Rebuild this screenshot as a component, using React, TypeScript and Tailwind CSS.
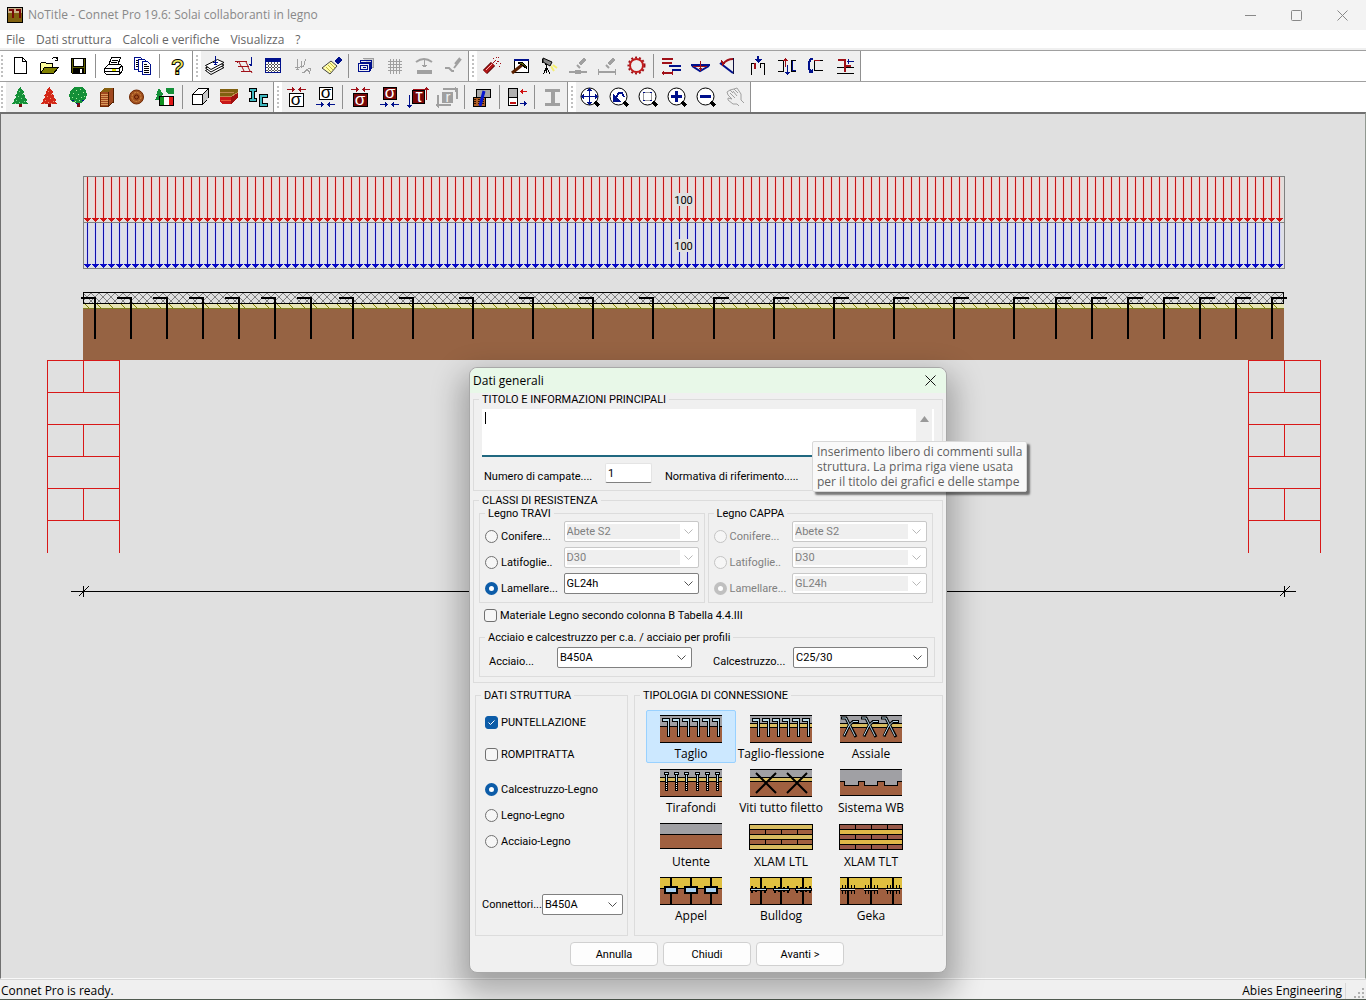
import { useState } from "react";
import type { ReactNode } from "react";

const RED = "#a01018";
const BLUE = "#00108c";
const GRAY = "#a0a0a0";

const Icon = ({ children }: { children: ReactNode }) => (
  <svg width="21" height="21" viewBox="0 0 21 21" fill="none" stroke="#000" shapeRendering="crispEdges" className="shrink-0 overflow-visible" aria-hidden="true">
    {children}
  </svg>
);

const Sym = ({ x, y, size, fill, children }: { x: number; y: number; size: number; fill: string; children: string }) => (
  <text x={x} y={y} fontSize={size} fill={fill} stroke="none" textAnchor="middle" fontFamily="Liberation Sans, sans-serif">
    {children}
  </text>
);

const Conifer = ({ fill, dots }: { fill: string; dots: string }) => (
  <Icon>
    <path d="M9 16h3v4H9z" fill="#7a0c10" stroke="none" />
    <path d="M10 0h1l1 3 2 2-1 1 2 3-1 1 3 3-1 1 2 3H2l2-3-1-1 3-3-1-1 2-3-1-1 2-2z" fill={fill} stroke="none" />
    <path d="M9 4.5h1M12 7.5h1M8 9.5h1M11 11.5h1M6 13.5h1M14 14.5h1M9 15.5h1M5 16.5h1M12 16.5h1" stroke={dots} />
  </Icon>
);

const Lens = ({ children }: { children?: ReactNode }) => (
  <Icon>
    <circle cx="9.5" cy="9.5" r="8.5" fill="#fff" shapeRendering="auto" />
    <path d="M15 15l4 4" strokeWidth="3" />
    {children}
  </Icon>
);

const icons: Record<string, ReactNode> = {
  nuovo: (
    <Icon>
      <path d="M4.5 1.5h8l4 4v12h-12z" fill="#fff" />
      <path d="M12.5 1.5v4h4" />
    </Icon>
  ),
  apri: (
    <Icon>
      <path d="M1.5 17.5v-10l1-1h4l1 1h6v4" fill="#ffff9c" />
      <path d="M1.5 17.5l4-6h14l-5 6z" fill="#808000" />
      <path d="M12.5 3.5l2-2h3l1 2M18.5 1v4M16 4.5h3" />
    </Icon>
  ),
  salva: (
    <Icon>
      <path d="M3.5 2.5h14v15h-13l-1-1z" fill="#606000" />
      <path d="M6 3h9v7H6z" fill="#fff" stroke="none" />
      <path d="M5.5 3v7.5h10V3" />
      <path d="M5 12h11v5H5z" fill="#000" stroke="none" />
      <path d="M12 13h2v4h-2z" fill="#fff" stroke="none" />
    </Icon>
  ),
  stampa: (
    <Icon>
      <path d="M5.5 9.5l3-8h9l-3 8z" fill="#fff" />
      <path d="M9 4.5h6M8 6.5h6" />
      <path d="M1.5 12.5l4-4h12l2 2v4l-3 4h-13l-2-2z" fill="#fff" />
      <path d="M1.5 12.5h14l4-3M2 15.5h14M16.5 12v6" />
      <path d="M9 13h4v2H9z" fill="#e8e800" stroke="none" />
    </Icon>
  ),
  anteprima: (
    <Icon>
      <path d="M2.5 1.5h6l3 3v9h-9z" fill="#fff" stroke={BLUE} />
      <path d="M4 4.5h4M4 6.5h5M4 8.5h5M4 10.5h5" />
      <path d="M6.5 3.5h6l3 3v9h-9z" fill="#fff" stroke={BLUE} />
      <path d="M10.5 5.5h5l3 3v10h-8z" fill="#fff" stroke={BLUE} />
      <path d="M12 8.5h3M12 10.5h5M12 12.5h5M12 14.5h5M12 16.5h5" />
    </Icon>
  ),
  guida: (
    <Icon>
      <text x="10.5" y="18" fontSize="21" textAnchor="middle" fontFamily="Liberation Sans, sans-serif" fill="#f0e860" stroke="#000" strokeWidth="2" paintOrder="stroke" shapeRendering="auto">?</text>
    </Icon>
  ),
  carichi: (
    <Icon>
      <g shapeRendering="auto">
        <path d="M.5 14.5l12-6 6.5 3-13 7z" fill="#fff" />
        <path d="M.5 12l12-6 6.5 3-13 7z" fill="#fff" />
        <path d="M.5 9.5l12-6 6.5 3-13 7z" fill="#fff" />
      </g>
      <path d="M10.5 0v9M8 6.5h5M9 8h3" stroke={BLUE} />
    </Icon>
  ),
  combinazioni: (
    <Icon>
      <g stroke={RED} shapeRendering="auto">
        <path d="M1 5.5h12M4 10.5h11M7 15.5h11" />
        <path d="M2 5l2 2M5 6l2 4M12 6l2 4M8 11l2 4M14 11l2 4M17 15l1 2" />
      </g>
      <path d="M17.5 1v8M15 8.5h2M16 9.5h2" stroke={BLUE} />
    </Icon>
  ),
  tabella: (
    <Icon>
      <path d="M2.5 2.5h15v14h-15z" fill="#fff" stroke={BLUE} />
      <path d="M2 3h16v3H2z" fill={BLUE} stroke="none" />
      <path d="M5.5 6v10M8.5 6v10M11.5 6v10M14.5 6v10M3 8.5h14M3 11.5h14M3 14.5h14" stroke="#555" strokeDasharray="2 1" />
    </Icon>
  ),
  sisma: (
    <Icon>
      <path d="M5.5 3v11M3 11.5h5M4 13.5h3M9.5 5v7M8 10.5h3M13.5 3l-2 8M10 16.5h2l3-3 2 2v2M16 12h2v3" stroke={GRAY} />
    </Icon>
  ),
  pennello: (
    <Icon>
      <g shapeRendering="auto">
        <path d="M14 5l4-4 3 3-4 4z" fill={BLUE} stroke={BLUE} />
        <path d="M10 5l6 5-7 8-8-6z" fill="#fffca8" stroke="#444" />
        <path d="M5 11l5 5M7 9l5 5M9 7l5 5" stroke="#c0b840" />
      </g>
    </Icon>
  ),
  cornici: (
    <Icon>
      <path d="M6.5 2.5h11v9h-2" fill="#d0d0d0" stroke={GRAY} />
      <path d="M4.5 6v-1.5h11v8h-2M2.5 7.5h11v8h-11zM4.5 9.5h7v4h-7zM6.5 11.5h3" stroke={BLUE} />
      <path d="M3.5 6.5h11v8" stroke={BLUE} />
    </Icon>
  ),
  griglia: (
    <Icon>
      <path d="M5.5 3v15M8.5 3v15M11.5 3v15M14.5 3v15M3 5.5h14M3 8.5h14M3 11.5h14M3 14.5h14" stroke={GRAY} />
    </Icon>
  ),
  inflessione: (
    <Icon>
      <path d="M2 6q8-6 16 0" stroke={GRAY} strokeWidth="2" shapeRendering="auto" />
      <path d="M10.5 4v7M8 9.5h5M9 10.5h3" stroke={GRAY} />
      <path d="M3 14h15v4H3z" fill={GRAY} stroke="none" />
    </Icon>
  ),
  curva: (
    <Icon>
      <path d="M2 12h4l3 3h2M18 3l-7 9M17 2l-5 6" stroke={GRAY} strokeWidth="2" shapeRendering="auto" />
    </Icon>
  ),
  dinamite: (
    <Icon>
      <path d="M4 16l8-8" stroke="#500" strokeWidth="6" shapeRendering="auto" />
      <path d="M4 16l8-8" stroke="#b01818" strokeWidth="4" shapeRendering="auto" />
      <path d="M5 14l6-6" stroke="#ffb0b0" />
      <path d="M12 7l3-3M15.5 1v1M18 1l-1 1M16 5.5h2M19 7.5h1M18.5 10v1M12.5 2v1M15 7l1 1" stroke={RED} />
    </Icon>
  ),
  martello: (
    <Icon>
      <path d="M4.5 3.5h14v13h-14z" fill="#fff" />
      <path d="M4 3h15v2H4z" fill={BLUE} stroke="none" />
      <path d="M2 17l10-8" stroke="#5a2000" strokeWidth="3" shapeRendering="auto" />
      <path d="M8 7l4-1 4 4v2l-4-3z" fill="#606000" />
    </Icon>
  ),
  lampada: (
    <Icon>
      <g shapeRendering="auto">
        <path d="M4 2l9 4-2 4-7-4z" fill="#888" />
        <path d="M12 10l3 5M14 9l4 3M13 12l2 3" stroke="#f4ee70" strokeWidth="2" />
      </g>
      <path d="M3.5 3v4M6.5 7l1 3v7M7.5 11l-3 7M8 12l3 6" />
    </Icon>
  ),
  cancella1: (
    <Icon>
      <g stroke={GRAY} shapeRendering="auto">
        <path d="M11 7l5-5 2 2-5 5z" fill={GRAY} />
        <path d="M9 9l3 3" strokeWidth="2" />
      </g>
      <path d="M1 16h18" stroke={GRAY} strokeWidth="2" />
      <path d="M7 14h6v4H7z" fill={GRAY} stroke="none" />
    </Icon>
  ),
  cancella2: (
    <Icon>
      <g stroke={GRAY} shapeRendering="auto">
        <path d="M11 7l5-5 2 2-5 5z" fill={GRAY} />
        <path d="M9 9l3 3" strokeWidth="2" />
      </g>
      <path d="M1 16h18" stroke={GRAY} strokeWidth="2" />
      <path d="M1.5 13v6M18.5 13v6" stroke={GRAY} />
    </Icon>
  ),
  ingranaggio: (
    <Icon>
      <g shapeRendering="auto">
        <circle cx="10.5" cy="9.5" r="8" stroke={RED} strokeWidth="2" strokeDasharray="2 2" />
        <circle cx="10.5" cy="9.5" r="6.5" stroke="#c01c1c" strokeWidth="2" />
      </g>
    </Icon>
  ),
  tagli: (
    <Icon>
      <path d="M1 3h11M1 7h10M1 17h11" stroke={RED} strokeWidth="2" />
      <path d="M2.5 15v4M11.5 15v4" stroke={RED} />
      <path d="M8 10h12M11 14h9" stroke={BLUE} strokeWidth="2" />
    </Icon>
  ),
  momento: (
    <Icon>
      <path d="M1 9h19" stroke={BLUE} strokeWidth="2" />
      <path d="M2 10l8 5 9-5" stroke={BLUE} strokeWidth="2" shapeRendering="auto" />
      <path d="M3 10.5h14M10.5 5v10M9 12.5h3" stroke={RED} />
    </Icon>
  ),
  rotazione: (
    <Icon>
      <path d="M1 7l13 10" stroke={BLUE} strokeWidth="2" shapeRendering="auto" />
      <path d="M14.5 2v16" stroke="#101040" />
      <path d="M4 8q4-5 10-5" stroke={RED} strokeWidth="2" shapeRendering="auto" />
      <path d="M2 4l1 6 3-3z" fill={RED} stroke="none" />
    </Icon>
  ),
  appoggio: (
    <Icon>
      <path d="M3.5 19V7.5h4M16.5 19V7.5h-4" strokeWidth="1" />
      <path d="M7 7v6" stroke={RED} strokeWidth="2" />
      <path d="M12.5 7v5" />
      <path d="M10 0v5" stroke={BLUE} strokeWidth="2" />
      <path d="M7 3h7l-3.5 4z" fill={BLUE} stroke="none" />
    </Icon>
  ),
  scorrimento: (
    <Icon>
      <path d="M1 4.5h5v11H1M19 4.5h-5v11h5" />
      <path d="M8.5 2v9M6 4.5h5M7 3.5h3" stroke={RED} />
      <path d="M10.5 9v10M8 16.5h5M9 17.5h3M15.5 5v10M15 14.5h4" stroke={BLUE} />
    </Icon>
  ),
  torsione: (
    <Icon>
      <path d="M17 4.5H8.5v10H17" />
      <path d="M7 3H5L3 6v7l2 3" stroke={BLUE} strokeWidth="2" />
      <path d="M2 17h5v-4z" fill={BLUE} stroke="none" />
      <path d="M8 4.5h6" stroke={RED} />
    </Icon>
  ),
  vincolo: (
    <Icon>
      <path d="M2 11.5h17M2 17.5h17" />
      <path d="M3 4h7v12M10 10h6" stroke={RED} strokeWidth="2" />
      <path d="M12 5.5h7M13.5 3v5" stroke={BLUE} />
    </Icon>
  ),
  abete: <Conifer fill="#149038" dots="#80e090" />,
  abeteRosso: <Conifer fill="#d42818" dots="#f09070" />,
  latifoglia: (
    <Icon>
      <path d="M9 16h3v4H9z" fill="#7a0c10" stroke="none" />
      <path d="M7 0h7l4 3 1 5-2 5-4 3H8l-5-2-2-6 2-5z" fill="#149038" stroke="none" />
      <path d="M8 3.5h1M12 2.5h1M5 6.5h1M10 7.5h1M15 5.5h1M4 10.5h1M8 11.5h1M13 10.5h1M16 9.5h1M11 13.5h1M7 14.5h1" stroke="#b0f0a0" />
      <path d="M14 13.5h2M8 16l2 2M4 13.5h2" stroke={BLUE} />
    </Icon>
  ),
  lamellare: (
    <Icon>
      <path d="M3 5l5-4h8v14l-5 4H3z" fill="#a04820" stroke="none" />
      <path d="M3 5l5-4h8l-5 4z" fill="#886010" stroke="none" />
      <path d="M3 7.5h8M3 9.5h8M3 11.5h8M3 13.5h8M3 15.5h8M3 17.5h8" stroke="#d89858" />
      <path d="M11.5 5v14l5-4V1" stroke="#502000" />
      <path d="M3.5 5v14h8" stroke="#702800" />
    </Icon>
  ),
  tronco: (
    <Icon>
      <g shapeRendering="auto">
        <circle cx="10.5" cy="10" r="7" fill="#a05020" stroke="#702800" />
        <circle cx="10.5" cy="10" r="4.5" stroke="#d89040" strokeDasharray="2 1" />
        <circle cx="10.5" cy="10" r="2" stroke="#601800" />
      </g>
    </Icon>
  ),
  italia: (
    <Icon>
      <path d="M4 1l4 6-1 2 2 4H0l2-4-1-1z" fill="#149038" stroke="none" />
      <path d="M11 1h8v6h-6l-2-3z" fill="#149038" stroke="none" />
      <path d="M4.5 9.5h14v9h-14z" fill="#fff" />
      <path d="M5 10h4v8H5z" fill="#109020" stroke="none" />
      <path d="M14 10h4v8h-4z" fill="#e01818" stroke="none" />
    </Icon>
  ),
  blocco: (
    <Icon>
      <path d="M2.5 7.5l6-6h10v9l-6 7h-10z" fill="#fff" />
      <path d="M12 8l6-6v9l-6 6z" fill="#c8c8c8" stroke="none" />
      <path d="M2.5 7.5h10v10M12.5 7.5l6-6" />
    </Icon>
  ),
  trave: (
    <Icon>
      <g stroke="none">
        <path d="M1 2h18v4l-7 4H1z" fill="#806010" />
        <path d="M1 9h11l7-4v5l-7 7H4l-3-2z" fill="#c81818" />
        <path d="M12 9l7-4v5l-7 7z" fill="#a01010" />
      </g>
      <path d="M1 5.5h14M1 9.5h11l7-4" stroke="#c08850" />
      <path d="M2 13.5h10" stroke="#e85838" />
    </Icon>
  ),
  profili: (
    <Icon>
      <path d="M1 3h8M5 3v10M1 13h8" strokeWidth="4" />
      <path d="M2 3h6M5 3v10M2 13h6" stroke="#40b8c0" strokeWidth="2" />
      <path d="M20 9h-7v9h7" strokeWidth="4" />
      <path d="M19 9h-6v9h6" stroke="#40b8c0" strokeWidth="2" />
    </Icon>
  ),
  sigma1: (
    <Icon>
      <path d="M3.5 6.5h14v13h-14z" fill="#fff" />
      <Sym x={10} y={18} size={17} fill="#000">σ</Sym>
      <path d="M1 2.5h8M12 2.5h8M6.5 0v5M14.5 0v5M7.5 1v3M13.5 1v3" stroke={RED} />
    </Icon>
  ),
  sigma2: (
    <Icon>
      <path d="M4.5 .5h13v12h-13z" fill="#fff" />
      <Sym x={11} y={11} size={17} fill="#000">σ</Sym>
      <path d="M1 17.5h8M12 17.5h8M6.5 15v5M14.5 15v5M7.5 16v3M13.5 16v3" stroke={BLUE} />
    </Icon>
  ),
  sigma3: (
    <Icon>
      <path d="M3.5 6.5h14v13h-14z" fill="#780808" />
      <Sym x={10} y={18} size={17} fill="#fff">σ</Sym>
      <path d="M1 2.5h8M12 2.5h8M6.5 0v5M14.5 0v5M7.5 1v3M13.5 1v3" stroke={RED} />
    </Icon>
  ),
  sigma4: (
    <Icon>
      <path d="M4.5 .5h13v12h-13z" fill="#780808" />
      <Sym x={11} y={11} size={17} fill="#fff">σ</Sym>
      <path d="M1 17.5h8M12 17.5h8M6.5 15v5M14.5 15v5M7.5 16v3M13.5 16v3" stroke={BLUE} />
    </Icon>
  ),
  tau: (
    <Icon>
      <path d="M4.5 3.5h12v13h-12z" fill="#780808" />
      <Sym x={11} y={15} size={18} fill="#fff">τ</Sym>
      <path d="M5 2.5h12M18.5 0v13M16 2.5h5M17 1.5h3" stroke={RED} />
      <path d="M1.5 8v13M-1 18.5h5M0 19.5h3" stroke={BLUE} />
    </Icon>
  ),
  rigidezza: (
    <Icon>
      <path d="M5 5h11v11H5z" fill={GRAY} stroke="none" />
      <Sym x={11} y={15} size={15} fill="#f0f0f0">r</Sym>
      <path d="M6 2h14v10M0 18h14M1 18V8" stroke={GRAY} strokeWidth="2" />
      <path d="M18 0l4 2-4 3zM2 16l-4 2 4 3z" fill={GRAY} stroke="none" />
    </Icon>
  ),
  connettore: (
    <Icon>
      <path d="M4.5 2.5h14v8h-14z" fill="#a8a8a8" />
      <path d="M1.5 10.5h12v9h-12z" fill="#b06028" />
      <path d="M2 12.5h11M2 14.5h11M2 16.5h11" stroke="#301000" strokeDasharray="2 2" />
      <path d="M12 4L8 19" stroke="#0818d0" strokeWidth="3" shapeRendering="auto" />
    </Icon>
  ),
  sezione: (
    <Icon>
      <path d="M1.5 1.5h9v9h-9z" fill="#b0b0b0" />
      <path d="M1.5 10.5h9v8h-9z" fill="#fff" />
      <path d="M3 16h6" stroke="#c01010" strokeWidth="2" />
      <path d="M13 4.5h7M15.5 2v5M14.5 3v3" stroke="#d01010" />
      <path d="M13 16.5h7M17.5 14v5M18.5 15v3" stroke={BLUE} />
    </Icon>
  ),
  profiloI: (
    <Icon>
      <path d="M3 3h15M3 17h15" stroke={GRAY} strokeWidth="3" />
      <path d="M10.5 3v15" stroke={GRAY} strokeWidth="4" />
    </Icon>
  ),
  zoomTutto: (
    <Lens>
      <path d="M9.5 1v17M1 9.5h17" stroke={BLUE} />
      <path d="M9.5 1l3 3h-6zM9.5 18l3-3h-6zM1 9.5l3-3v6zM18 9.5l-3-3v6z" fill={BLUE} stroke="none" />
    </Lens>
  ),
  zoomPrec: (
    <Lens>
      <path d="M4 7v7h7z" fill={BLUE} stroke={BLUE} />
      <path d="M7 10l3-4h3l2 4" stroke={BLUE} strokeWidth="2" />
    </Lens>
  ),
  zoomFinestra: (
    <Lens>
      <path d="M5.5 5.5h8v8h-8z" stroke="#999" />
      <path d="M5 5.5h2M12 5.5h2M5 13.5h2M12 13.5h2" stroke={BLUE} />
    </Lens>
  ),
  zoomPiu: (
    <Lens>
      <path d="M4 9.5h11M9.5 4v11" stroke={BLUE} strokeWidth="3" />
    </Lens>
  ),
  zoomMeno: (
    <Lens>
      <path d="M4 9.5h11" stroke={BLUE} strokeWidth="3" />
    </Lens>
  ),
  mano: (
    <Icon>
      <g stroke={GRAY} shapeRendering="auto">
        <path d="M2 5l3-2 3 3M3 8l-1-3M5 3l4-1 4 4M9 2l3-1 4 6v6l3 3M3 8l4 4-4-1v2l5 4h4l2 2M5 6l5 5M8 4l4 5" />
      </g>
    </Icon>
  ),
};

type Bar = { white?: boolean; groups: string[][] };

const disabledTools = ["sisma", "griglia", "inflessione", "curva", "cancella1", "cancella2", "rigidezza", "profiloI", "mano"];

const barRows: Bar[][] = [
  [
    { white: true, groups: [["nuovo", "apri", "salva"], ["stampa", "anteprima"], ["guida"]] },
    { groups: [["carichi", "combinazioni", "tabella", "sisma", "pennello"], ["cornici", "griglia", "inflessione", "curva"]] },
    {
      groups: [
        ["dinamite", "martello", "lampada", "cancella1", "cancella2", "ingranaggio"],
        ["tagli", "momento", "rotazione", "appoggio", "scorrimento", "torsione", "vincolo"],
      ],
    },
  ],
  [
    { groups: [["abete", "abeteRosso", "latifoglia", "lamellare", "tronco", "italia"], ["blocco", "trave", "profili"]] },
    { groups: [["sigma1", "sigma2"], ["sigma3", "sigma4", "tau", "rigidezza"], ["connettore"], ["sezione"], ["profiloI"]] },
    { groups: [["zoomTutto", "zoomPrec", "zoomFinestra", "zoomPiu", "zoomMeno", "mano"]] },
  ],
];

const ToolRow = ({ bars }: { bars: Bar[] }) => (
  <div className="flex h-[31px] border-t border-[#a0a0a0] bg-white">
    {bars.map((bar, i) => (
      <div key={i} className={`flex border-r border-[#909090] ${bar.white ? "bg-white" : "bg-[#efefef]"}`}>
        <div className={`flex bg-white py-1 ${i === 0 ? "w-[6px] pl-px" : "w-2 pl-[3px]"}`}>
          <div className="w-0 border-l-2 border-dotted border-[#c0c0c0]" />
        </div>
        {bar.groups.map((group, g) => (
          <div key={g} className="flex">
            {g > 0 && <div className="my-[3px] mr-[3px] ml-[2px] w-px bg-[#909090]" />}
            {group.map((tool) => (
              <button
                key={tool}
                aria-label={tool}
                disabled={disabledTools.includes(tool)}
                className="flex w-[29px] items-center justify-center"
              >
                {icons[tool]}
              </button>
            ))}
          </div>
        ))}
      </div>
    ))}
  </div>
);

const loadXs = Array.from({ length: 150 }, (_, i) => 87 + i * 8);
const pinXs = [95, 131, 167, 203, 239, 275, 311, 353, 413, 473, 533, 593, 653, 714, 774, 834, 894, 954, 1014, 1056, 1092, 1128, 1164, 1200, 1236, 1272];

const Load = ({ y, line, glow, head, tint }: { y: number; line: string; glow: string; head: string; tint: string }) => (
  <g>
    <rect x="83.5" y={y + 0.5} width="1201" height="46" fill={tint} stroke="#808080" />
    {loadXs.map((x) => (
      <g key={x}>
        <rect x={x - 1} y={y + 1} width="3" height="42" fill={glow} />
        <rect x={x} y={y + 1} width="1" height="42" fill={line} />
        <path d={`M${x - 3} ${y + 42}h7v1h-1v1h-1v1h-1v1h-1v-1h-1v-1h-1v-1h-1z`} fill={head} />
      </g>
    ))}
    <rect x="673" y={y + 17} width="20" height="13" fill="#e0e0e0" />
    <text x="683.5" y={y + 28} fontSize="11" textAnchor="middle" fill="#000" fontFamily="Roboto, sans-serif">
      100
    </text>
  </g>
);

const Wall = ({ x }: { x: number }) => (
  <path
    d={`M${x}.5 553V360.5h72V553M${x} 392.5h72M${x} 424.5h72M${x} 456.5h72M${x} 488.5h72M${x} 520.5h72M${x + 36}.5 360v32M${x + 36}.5 424v32M${x + 36}.5 488v32`}
    fill="none"
    stroke="#d81818"
  />
);

const Drawing = () => (
  <svg className="h-full w-full" viewBox="1 114 1364 864" shapeRendering="crispEdges" role="img" aria-label="Schema del solaio">
    <defs>
      <pattern id="mesh" width="8" height="8" patternUnits="userSpaceOnUse" x="83" y="293">
        <path d="M0 0l8 8M8 0l-8 8" stroke="#808080" fill="none" />
      </pattern>
      <pattern id="plank" width="12" height="5" patternUnits="userSpaceOnUse" x="83" y="304">
        <path d="M2 0l5 5" stroke="#808000" fill="none" />
      </pattern>
    </defs>
    <Load y={176} line="#c01818" glow="#f4cccc" head="#d01010" tint="#e3dedc" />
    <Load y={222} line="#1010a8" glow="#d2d2f6" head="#0808c8" tint="#dedfe6" />
    <rect x="83" y="308" width="1201" height="52" fill="#966343" />
    <rect x="83.5" y="292.5" width="1200" height="11" fill="#e0e0e0" />
    <rect x="83.5" y="292.5" width="1200" height="11" fill="url(#mesh)" stroke="#000" />
    <rect x="83" y="304" width="1201" height="4" fill="#e6e4b4" />
    <rect x="83" y="304" width="1201" height="4" fill="url(#plank)" />
    <path d="M83 308.5h1201" stroke="#808020" />
    <path
      d={pinXs.map((x) => (x < 700 ? `M${x - 14} 298H${x}V339` : `M${x + 15} 298H${x}V339`)).join("")}
      fill="none"
      stroke="#000"
      strokeWidth="2"
    />
    <Wall x={47} />
    <Wall x={1248} />
    <path d="M71 591.5h1225M83.5 586v11M1284.5 586v11M79 596l10-10M1280 596l10-10" stroke="#000" />
  </svg>
);

const Group = ({ title, className = "", children }: { title: string; className?: string; children: ReactNode }) => (
  <fieldset className={`min-w-0 border border-[#dcdcdc] ${className}`}>
    <legend className="ml-[5px] h-[13px] px-[3px] leading-[13px] whitespace-nowrap">{title}</legend>
    {children}
  </fieldset>
);

const Chevron = ({ className }: { className: string }) => (
  <svg width="9" height="5" viewBox="0 0 9 5" fill="none" stroke="currentColor" className={className} aria-hidden="true">
    <path d="M.5 .5l4 4 4-4" />
  </svg>
);

const Combo = ({ label, value, disabled, className = "" }: { label: string; value: string; disabled?: boolean; className?: string }) => (
  <div className={`flex h-[21px] items-center rounded-[2px] border bg-white p-[2px] ${disabled ? "border-[#c8c8c8]" : "border-[#808080]"} ${className}`}>
    <select
      aria-label={label}
      disabled={disabled}
      className={`h-[15px] min-w-0 flex-1 appearance-none leading-[15px] ${disabled ? "bg-[#efefef] text-[#808080] opacity-100" : "bg-white text-black"}`}
    >
      <option>{value}</option>
    </select>
    <Chevron className={`mr-[3px] ml-1 ${disabled ? "text-[#b8b8b8]" : "text-[#505050]"}`} />
  </div>
);

const radioClass =
  "size-[13px] shrink-0 appearance-none rounded-full border border-[#707070] bg-[#f6f6f6] checked:border-4 checked:border-[#0c5ca8] checked:bg-white disabled:border-[#c4c4c4] disabled:checked:border-[#c0c0c0]";

const Radio = ({ name, label, checked, disabled }: { name: string; label: string; checked?: boolean; disabled?: boolean }) => (
  <label className={`flex items-center gap-[3px] whitespace-nowrap ${disabled ? "text-[#808080]" : ""}`}>
    <input type="radio" name={name} defaultChecked={checked} disabled={disabled} className={radioClass} />
    {label}
  </label>
);

const Check = ({ label, checked }: { label: string; checked?: boolean }) => {
  const [on, setOn] = useState(!!checked);
  return (
    <label className="flex items-center gap-[3px] whitespace-nowrap">
      <span className="relative flex">
        <input
          type="checkbox"
          checked={on}
          onChange={() => setOn(!on)}
          className="size-[13px] appearance-none rounded-[3px] border border-[#707070] bg-[#f6f6f6] checked:border-[#0c5ca8] checked:bg-[#0c5ca8]"
        />
        {on && (
          <svg viewBox="0 0 13 13" fill="none" stroke="#fff" className="pointer-events-none absolute inset-0">
            <path d="M3.5 6.5l2 2 4-4" />
          </svg>
        )}
      </span>
      {label}
    </label>
  );
};

const WoodClass = ({ title, name, disabled }: { title: string; name: string; disabled?: boolean }) => {
  const rows = [
    { label: "Conifere...", value: "Abete S2" },
    { label: "Latifoglie..", value: "D30" },
    { label: "Lamellare...", value: "GL24h" },
  ];
  return (
    <Group title={title} className="h-[96px] flex-1">
      <div className="flex flex-col gap-1 pt-px pr-[5px] pl-[5px]">
        {rows.map((row, i) => (
          <div key={row.label} className="flex justify-between">
            <div className="pt-[9px]">
              <Radio name={name} label={row.label} checked={i === 2} disabled={disabled} />
            </div>
            <Combo label={row.label} value={row.value} disabled={disabled || i < 2} className="w-[135px]" />
          </div>
        ))}
      </div>
    </Group>
  );
};

const BROWN = "#a06040";
const CEMENT = "#a0a0a4";
const YELLOW = "#d8bc60";

const Layers = ({ plank, top = CEMENT }: { plank?: boolean; top?: string }) => (
  <>
    <path d="M0 1h62v12H0z" fill={top} stroke="none" />
    <path d="M0 12h62v15H0z" fill={BROWN} stroke="none" />
    {plank && <path d="M-1 8.5h64v4H-1z" fill={YELLOW} />}
    {!plank && <path d="M0 11.5h62" />}
    <path d="M0 .5h62M0 27.5h62" />
  </>
);

const hooks = [3, 13, 23, 33, 43, 53];

const Hooks = () => (
  <path d={hooks.map((x) => `M${x - 0.5} 3.5h7v18h-2v-15h-5z`).join("")} fill="#b8d8e8" />
);

const Bricks = ({ even, odd }: { even: string; odd: string }) => (
  <>
    {[0, 1, 2, 3, 4].map((r) => (
      <rect key={r} x=".5" y={1.5 + r * 5} width="63" height="5" fill={r % 2 ? odd : even} />
    ))}
  </>
);

const thumbs: { label: string; art: ReactNode }[] = [
  { label: "Taglio", art: <><Layers /><Hooks /></> },
  { label: "Taglio-flessione", art: <><Layers plank /><Hooks /></> },
  {
    label: "Assiale",
    art: (
      <>
        <Layers plank />
        <g shapeRendering="auto">
          {[0, 20, 40].map((x) => (
            <g key={x} transform={`translate(${x} 0)`}>
              <path d="M1 3h5l3 6 7 13M19 6.5h-6l-4 4-5 11" strokeWidth="3" />
              <path d="M2 3h4l3 6 6 12M18 6.5h-5l-4 4-5 10" stroke="#b8d8e8" />
            </g>
          ))}
        </g>
      </>
    ),
  },
  {
    label: "Tirafondi",
    art: (
      <>
        <Layers plank />
        {[6, 16, 26, 37, 47, 57].map((x) => (
          <g key={x}>
            <path d={`M${x + 0.5} 4v18`} strokeWidth="3" />
            <path d={`M${x - 1.5} 3.5h4v2h-4z`} fill="#b8d8e8" />
            <path d={`M${x + 0.5} 6v7`} stroke="#b8d8e8" />
            <path d={`M${x + 0.5} 14v7`} stroke="#fff" strokeDasharray="1 1" />
          </g>
        ))}
      </>
    ),
  },
  {
    label: "Viti tutto filetto",
    art: (
      <>
        <Layers plank />
        <path d="M6 4l20 20M26 4L6 24M37 4l20 20M57 4L37 24" strokeWidth="2" shapeRendering="auto" />
      </>
    ),
  },
  {
    label: "Sistema WB",
    art: (
      <>
        <path d="M0 1h62v17H0z" fill={CEMENT} stroke="none" />
        <path d="M-1 12.5h5.5v4h14v-4h6v4h13v-4h7v4h13v-4h6V26.5H-1z" fill={BROWN} />
        <path d="M0 .5h62" />
      </>
    ),
  },
  {
    label: "Utente",
    art: (
      <>
        <path d="M0 1h62v11H0z" fill={CEMENT} stroke="none" />
        <path d="M0 12h62v14H0z" fill={BROWN} stroke="none" />
        <path d="M0 .5h62M0 11.5h62M0 25.5h62" />
      </>
    ),
  },
  {
    label: "XLAM LTL",
    art: (
      <>
        <Bricks even="#d8bc60" odd={BROWN} />
        <path d="M16.5 7v4M32.5 7v4M48.5 7v4M16.5 17v4M32.5 17v4M48.5 17v4" />
      </>
    ),
  },
  {
    label: "XLAM TLT",
    art: (
      <>
        <Bricks even="#985848" odd="#e0b848" />
        <path d="M16.5 2v4M32.5 2v4M48.5 2v4M16.5 12v4M32.5 12v4M48.5 12v4M16.5 22v4M32.5 22v4M48.5 22v4" />
      </>
    ),
  },
  {
    label: "Appel",
    art: (
      <>
        <Layers top="#e0c040" />
        <path d="M11 0v28M31 0v28M51 0v28" strokeWidth="2" />
        <path d="M5 10h12v6H5zM25 10h12v6H25zM45 10h12v6H45z" fill="#a8d0f0" strokeWidth="2" />
      </>
    ),
  },
  {
    label: "Bulldog",
    art: (
      <>
        <Layers top="#e0c040" />
        <path d="M11 0v28M31 0v28M53 0v28" strokeWidth="2" />
        {[1, 24, 46].map((x) => (
          <g key={x}>
            <path d={`M${x - 1} 12.5h17`} strokeWidth="3" />
            <path d={`M${x + 1} 9v7M${x + 5} 10v5M${x + 10} 10v5M${x + 14} 9v7`} strokeWidth="2" />
            <path d={`M${x} 12.5h15`} stroke="#b8d8e8" />
          </g>
        ))}
      </>
    ),
  },
  {
    label: "Geka",
    art: (
      <>
        <Layers top="#e0c040" />
        <path d="M8 0v28M31 0v28M53 0v28" strokeWidth="2" />
        {[1, 24, 46].map((x) => (
          <g key={x}>
            <path d={`M${x} 12.5h14`} strokeWidth="3" />
            <path d={`M${x + 1.5} 8v9M${x + 4.5} 8v9M${x + 7.5} 8v9M${x + 10.5} 8v9M${x + 13.5} 8v9`} />
            <path d={`M${x} 12.5h14`} stroke="#e0e0d0" />
          </g>
        ))}
      </>
    ),
  },
];

const GeneralDataDialog = () => {
  const [selected, setSelected] = useState("Taglio");
  return (
    <div
      role="dialog"
      aria-label="Dati generali"
      className="absolute top-[253px] left-[468px] w-[478px] rounded-lg border border-[#a8a8a8] bg-[#f0f0f0] font-['Roboto',sans-serif] text-[11px] leading-[13px] text-black shadow-[0_14px_30px_8px_rgba(0,0,0,0.28)]"
    >
      <div className="flex h-[25px] items-center justify-between rounded-t-lg bg-[#e8f8e8] pr-[10px] pl-[3px] font-['Open_Sans',sans-serif] text-xs">
        <span>Dati generali</span>
        <button aria-label="Chiudi finestra">
          <svg width="11" height="11" viewBox="0 0 11 11" stroke="#111" fill="none">
            <path d="M.5 .5l10 10M10.5 .5l-10 10" />
          </svg>
        </button>
      </div>

      <div className="flex flex-col px-[3px] pb-[6px]">
        <Group title="TITOLO E INFORMAZIONI PRINCIPALI" className="h-[98px]">
          <div className="relative mx-2 mt-[3px] flex h-[48px] border-b-2 border-[#206880] bg-white">
            <textarea
              aria-label="Titolo e informazioni principali"
              className="flex-1 resize-none bg-white p-[3px] caret-transparent outline-none"
            />
            <span className="absolute top-[3px] left-[3px] h-3 w-px bg-black" />
            <div className="flex w-[18px] justify-center border-r-2 border-white bg-[#f0f0f0] pt-[7px]">
              <svg width="9" height="6" viewBox="0 0 9 6" fill="#999">
                <path d="M4.5 0L9 6H0z" />
              </svg>
            </div>
          </div>
          <div className="flex items-end pt-[6px] pl-[10px]">
            <label htmlFor="campate" className="w-[121px]">Numero di campate....</label>
            <input id="campate" defaultValue="1" className="mr-[13px] h-5 w-[47px] rounded-[2px] border border-[#e4e4e4] border-b-[#808080] bg-white px-[2px]" />
            <span>Normativa di riferimento.....</span>
          </div>
        </Group>

        <Group title="CLASSI DI RESISTENZA" className="mt-[3px] h-[189px]">
          <div className="flex gap-[3px] pr-[9px] pl-[5px]">
            <WoodClass title="Legno TRAVI" name="travi" />
            <WoodClass title="Legno CAPPA" name="cappa" disabled />
          </div>
          <div className="pt-[6px] pl-[10px]">
            <Check label="Materiale Legno secondo colonna B Tabella 4.4.III" />
          </div>
          <Group title="Acciaio e calcestruzzo per c.a. / acciaio per profili" className="mt-[9px] mr-[7px] ml-[5px] h-[46px]">
            <div className="flex items-end pt-[3px] pr-[6px] pl-[9px]">
              <span className="w-[68px]">Acciaio...</span>
              <Combo label="Acciaio" value="B450A" className="w-[135px]" />
              <span className="ml-[21px] flex-1">Calcestruzzo...</span>
              <Combo label="Calcestruzzo" value="C25/30" className="w-[135px]" />
            </div>
          </Group>
        </Group>

        <div className="mt-[6px] flex gap-[6px] pl-[2px]">
          <Group title="DATI STRUTTURA" className="h-[247px] w-[153px]">
            <div className="flex flex-col items-start pl-[9px]">
              <div className="flex flex-col gap-[19px] pt-[14px]">
                <Check label="PUNTELLAZIONE" checked />
                <Check label="ROMPITRATTA" />
              </div>
              <div className="flex flex-col gap-[13px] pt-[22px]">
                <Radio name="tipo" label="Calcestruzzo-Legno" checked />
                <Radio name="tipo" label="Legno-Legno" />
                <Radio name="tipo" label="Acciaio-Legno" />
              </div>
            </div>
            <div className="flex items-center pt-[46px] pl-[6px]">
              <span className="w-[60px]">Connettori...</span>
              <Combo label="Connettori" value="B450A" className="w-[81px]" />
            </div>
          </Group>
          <Group title="TIPOLOGIA DI CONNESSIONE" className="h-[247px] flex-1">
            <div className="grid grid-cols-[repeat(3,90px)] gap-y-px pt-[8px] pl-[11px]">
              {thumbs.map(({ label, art }) => (
                <button
                  key={label}
                  onClick={() => setSelected(label)}
                  className={`flex h-[53px] flex-col items-center rounded-[2px] border pt-1 font-['Open_Sans',sans-serif] text-xs whitespace-nowrap ${
                    selected === label ? "border-[#99d1ff] bg-[#cce8ff]" : "border-transparent"
                  }`}
                >
                  <svg width="64" height="29" viewBox="0 0 64 29" fill="none" stroke="#000" shapeRendering="crispEdges" className="shrink-0" aria-hidden="true">
                    {label.startsWith("XLAM") ? (
                      art
                    ) : (
                      <svg x="1" width="62" height="29" viewBox="0 0 62 29">
                        {art}
                      </svg>
                    )}
                  </svg>
                  <span className="leading-5">{label}</span>
                </button>
              ))}
            </div>
          </Group>
        </div>

        <div className="flex gap-[5px] pt-[6px] pl-[97px]">
          {["Annulla", "Chiudi", "Avanti >"].map((text) => (
            <button key={text} className="h-6 w-[88px] rounded border border-[#d0d0d0] bg-[#fdfdfd]">
              {text}
            </button>
          ))}
        </div>
      </div>
    </div>
  );
};

const App = () => {
  return (
    <div className="flex h-screen min-h-[1000px] flex-col border-b border-[#505a50] bg-[#f0f0f0] font-['Open_Sans',sans-serif] text-xs text-black">
      <header className="flex h-[30px] items-center bg-[#f3f3f3] pl-[7px] text-[#888]">
        <svg width="16" height="16" viewBox="0 0 16 16" fill="none" shapeRendering="crispEdges" className="mr-[5px]">
          <path d="M.5 .5h15v15H.5z" fill="#806010" stroke="#000" />
          <path d="M1 1h14v5H1z" fill="#c8b088" />
          <path d="M2 3h4v8M9 3h4v8" stroke="#780808" strokeWidth="2" />
        </svg>
        <h1 className="flex-1">NoTitle - Connet Pro 19.6: Solai collaboranti in legno</h1>
        <div className="flex gap-[35px] pr-[18px]">
          <button aria-label="Riduci">
            <svg width="11" height="11" viewBox="0 0 11 11" stroke="currentColor"><path d="M0 5.5h11" /></svg>
          </button>
          <button aria-label="Ingrandisci">
            <svg width="11" height="11" viewBox="0 0 11 11" stroke="currentColor" fill="none"><rect x=".5" y=".5" width="10" height="10" rx="1" /></svg>
          </button>
          <button aria-label="Chiudi">
            <svg width="11" height="11" viewBox="0 0 11 11" stroke="currentColor"><path d="M.5 .5l10 10M10.5 .5l-10 10" /></svg>
          </button>
        </div>
      </header>

      <nav className="flex h-5 items-end gap-[11px] border-b-2 border-[#f0f0f0] bg-white pl-[6px] text-[#666]">
        {["File", "Dati struttura", "Calcoli e verifiche", "Visualizza", "?"].map((item) => (
          <a key={item} href="#">{item}</a>
        ))}
      </nav>

      {barRows.map((bars, i) => (
        <ToolRow key={i} bars={bars} />
      ))}

      <main className="relative min-h-0 flex-1 border border-t-2 border-[#707070] border-r-[#909890] border-b-[#f8f8f8] bg-[#e0e0e0]">
        <Drawing />
        <GeneralDataDialog />
        <div
          role="tooltip"
          className="absolute top-[327px] left-[811px] rounded-[2px] border border-[#d8d8d8] bg-[#f9f9f9] px-1 py-[2px] leading-[15px] whitespace-nowrap text-[#606060] shadow-[3px_3px_2px_rgba(0,0,0,0.5)]"
        >
          Inserimento libero di commenti sulla
          <br />
          struttura. La prima riga viene usata
          <br />
          per il titolo dei grafici e delle stampe
        </div>
      </main>

      <footer className="flex h-5 items-end justify-between border-t border-[#d8d8d8] bg-[#f0f0f0] pr-[2px] pl-px">
        <span>Connet Pro is ready.</span>
        <span className="flex items-end">
          <span className="border-r border-[#d8d8d8] pr-[3px]">Abies Engineering</span>
          <svg width="10" height="10" viewBox="0 0 10 10" fill="#b0b0b0" className="mb-px ml-2">
            <path d="M8 0h2v2H8zM8 4h2v2H8zM8 8h2v2H8zM4 4h2v2H4zM4 8h2v2H4zM0 8h2v2H0z" />
          </svg>
        </span>
      </footer>
    </div>
  );
};

export default App;
